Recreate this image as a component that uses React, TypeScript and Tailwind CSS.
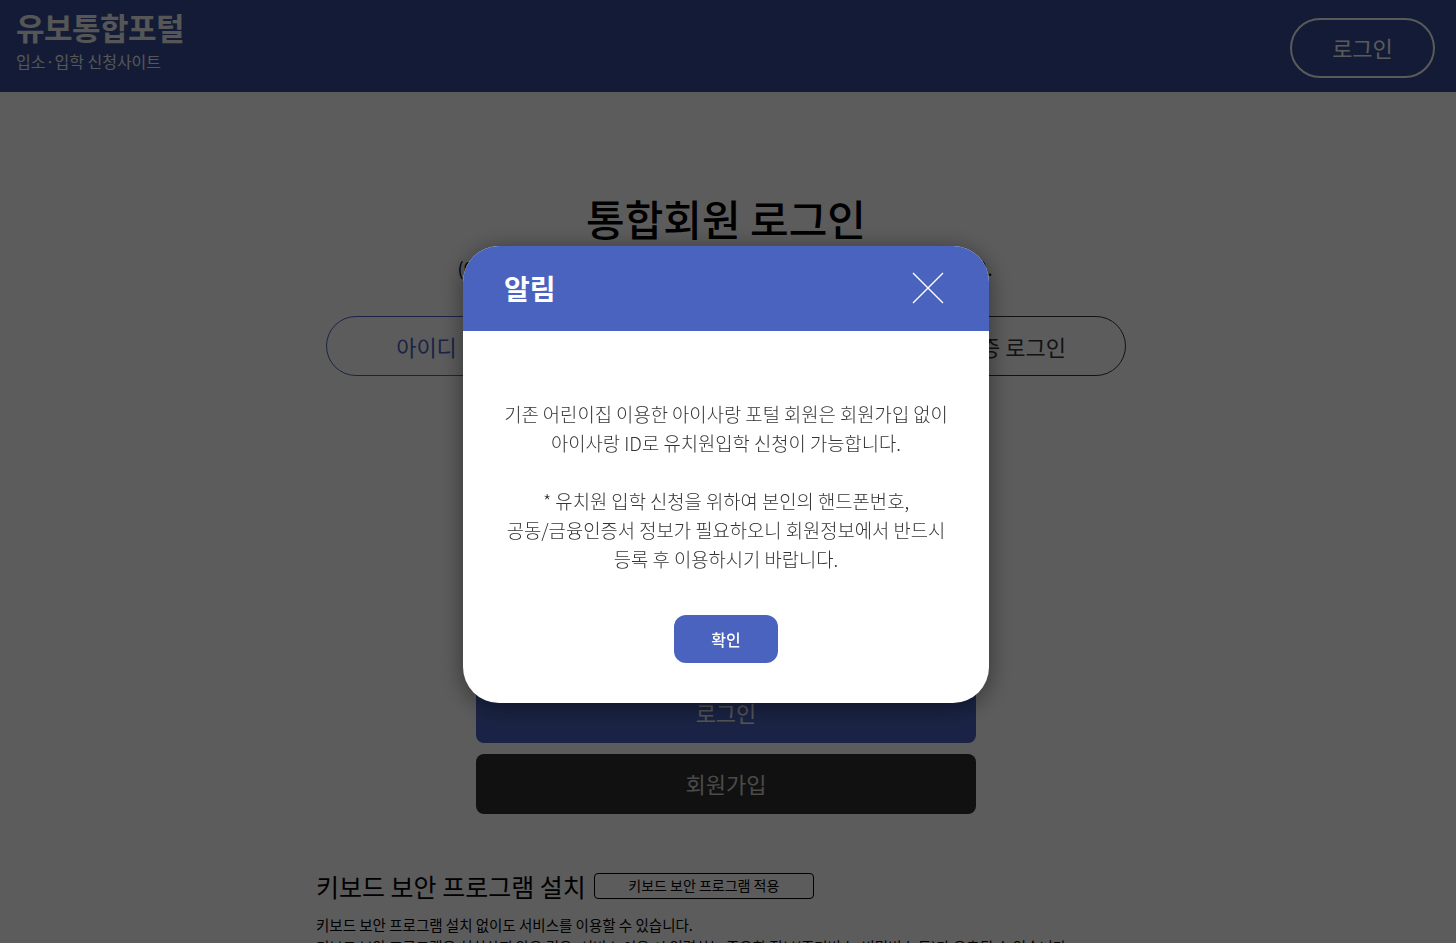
const font = { fontFamily: '"Noto Sans CJK KR", "Noto Sans", sans-serif' };

function CloseIcon() {
  return (
    <svg width="32" height="32" viewBox="0 0 32 32" fill="none">
      <path d="M1 1L31 31M31 1L1 31" stroke="#ffffff" strokeWidth="1.4" />
    </svg>
  );
}

function Header() {
  return (
    <header className="h-[92px] bg-[#354b96] flex items-center justify-between pl-4 pr-[21px]">
      <div className="self-start pt-[8px] flex flex-col">
        <div className="text-[31px] leading-[38px] font-bold text-[#ededed] tracking-[-0.5px]">유보통합포털</div>
        <div className="text-[16px] leading-[22px] text-[#ededed] mt-[4px]">입소·입학 신청사이트</div>
      </div>
      <button className="mt-[3px] w-[145px] h-[60px] rounded-full border-2 border-[#fafafa] text-[22px] text-[#fafafa]">
        로그인
      </button>
    </header>
  );
}

function LoginPage() {
  return (
    <main className="w-[820px] mx-auto pt-[98px] pb-20 translate-x-[-2px]">
      <h1 className="text-center text-[42px] leading-[56px] font-medium text-black">통합회원 로그인</h1>
      <p className="w-[535px] mx-auto -translate-x-[1px] text-[18px] leading-[28px] text-black mt-[8px] text-justify [text-align-last:justify]">
        (아이사랑 포털 회원은 별도의 회원가입 없이 로그인이 가능합니다).
      </p>

      <div className="grid grid-cols-3 px-[10px] mt-[34px]">
        <button className="h-[60px] rounded-full border border-[#4a63be] text-[22px] text-[#4a63be]">
          아이디 로그인
        </button>
        <button className="h-[60px] rounded-full border border-[#333] text-[22px] text-[#333]">
          간편 로그인
        </button>
        <button className="h-[60px] rounded-full border border-[#333] text-[22px] text-[#333]">
          공동인증 로그인
        </button>
      </div>

      <div className="w-[500px] mx-auto mt-[30px] flex flex-col gap-3">
        <input className="h-[60px] border border-[#ccc] rounded-lg px-5 text-[18px]" placeholder="아이디" />
        <input className="h-[60px] border border-[#ccc] rounded-lg px-5 text-[18px]" placeholder="비밀번호" type="password" />
        <div className="flex items-center justify-between text-[15px] text-[#555] py-2">
          <label className="flex items-center gap-2">
            <input type="checkbox" /> 아이디 저장
          </label>
          <span>아이디 찾기 | 비밀번호 찾기</span>
        </div>
        <div className="h-[70px]" />
        <button className="h-[60px] rounded-lg bg-[#4a63be] text-[22px] text-[#eeeeee]">로그인</button>
        <button className="h-[60px] rounded-lg bg-[#303030] text-[22px] text-[#cccccc] -mt-[1px]">회원가입</button>
      </div>

      <div className="mt-[56px] flex items-center gap-2">
        <h2 className="text-[25px] leading-[32px] text-black">키보드 보안 프로그램 설치</h2>
        <button className="w-[220px] h-[26px] rounded border border-black text-[14px] text-black">
          키보드 보안 프로그램 적용
        </button>
      </div>
      <p className="text-[14.5px] leading-[22px] text-black mt-[12px]">
        키보드 보안 프로그램 설치 없이도 서비스를 이용할 수 있습니다.
      </p>
      <p className="text-[14.5px] leading-[22px] text-black">
        키보드 보안 프로그램을 설치하지 않은 경우, 서비스 이용 시 입력하는 중요한 정보(주민번호, 비밀번호 등)가 유출될 수 있습니다.
      </p>
    </main>
  );
}

function AlertModal() {
  return (
    <div className="fixed inset-0 bg-[rgba(0,0,0,0.64)] flex items-center justify-center pt-[5px] pr-[4px]">
      <div className="w-[526px] rounded-[36px] bg-white overflow-hidden shadow-[0_4px_24px_rgba(0,0,0,0.45)]">
        <div className="h-[85px] bg-[#4a63be] flex items-center justify-between pl-[41px] pr-[45px]">
          <span className="text-[28px] font-bold text-white">알림</span>
          <CloseIcon />
        </div>
        <div className="pt-[68px] pb-[40px] flex flex-col items-center">
          <p className="text-center text-[18.8px] leading-[29px] text-[#333] font-light">
            기존 어린이집 이용한 아이사랑 포털 회원은 회원가입 없이
            <br />
            아이사랑 ID로 유치원입학 신청이 가능합니다.
            <br />
            <br />* 유치원 입학 신청을 위하여 본인의 핸드폰번호,
            <br />
            공동/금융인증서 정보가 필요하오니 회원정보에서 반드시
            <br />
            등록 후 이용하시기 바랍니다.
          </p>
          <button className="mt-[42px] w-[104px] h-[48px] rounded-[12px] bg-[#4a63be] text-white text-[16px] font-medium">
            확인
          </button>
        </div>
      </div>
    </div>
  );
}

export default function App() {
  return (
    <div className="min-h-screen bg-white" style={font}>
      <Header />
      <LoginPage />
      <AlertModal />
    </div>
  );
}
